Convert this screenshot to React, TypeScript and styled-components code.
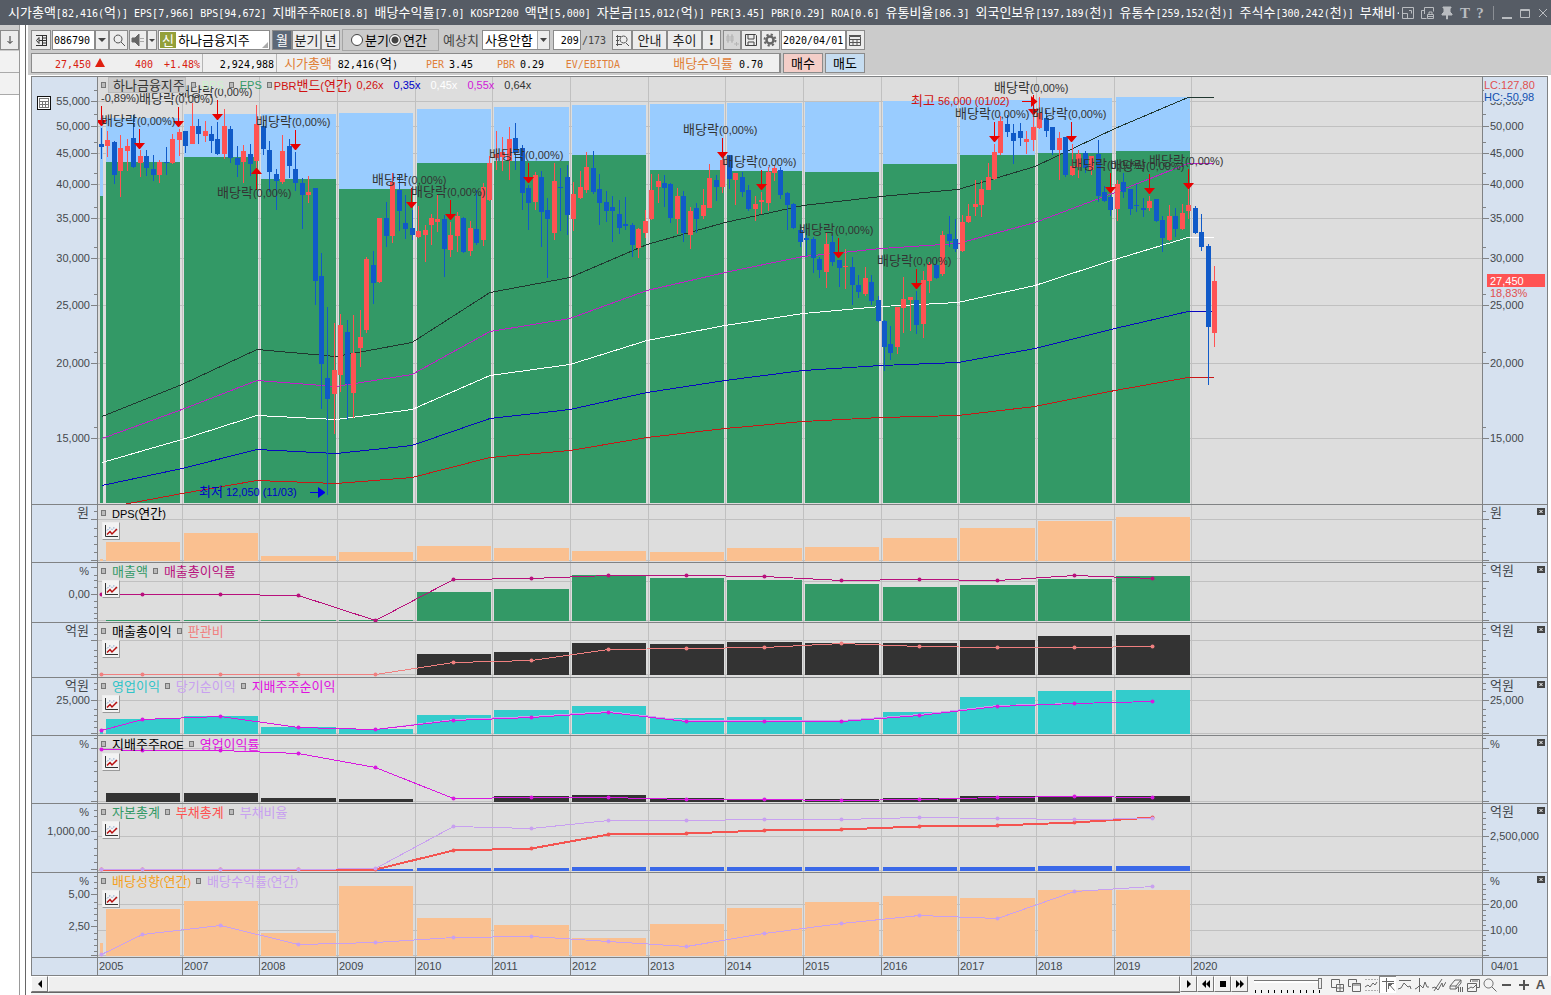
import React from "react";
import styled, { createGlobalStyle, css } from "styled-components";

/* ---------- theme values ---------- */
const KR = '"Noto Sans CJK KR", sans-serif';
const SANS = '"Liberation Sans", "Noto Sans CJK KR", sans-serif';
const MONO = '"DejaVu Sans Mono", "Noto Sans CJK KR", monospace';
const C = {
  line: "#808284",
  grid: "#c0c0c0",
  plot: "#dddddd",
  axis: "#d6e1ef",
  bar: "#cbcbcb",
  text: "#44484c",
  green: "#339966",
  sky: "#99ccff",
  up: "#ff5353",
  down: "#105ac8",
  orange: "#fac090",
};

const Global = createGlobalStyle`
  *, *::before, *::after { box-sizing: border-box; }
  body { margin: 0; background: #fff; font: 13px/16px ${KR}; color: #000; }
  button, input, select { font: inherit; color: inherit; margin: 0; }
`;

/* ---------- mixed Korean / Latin text ---------- */
const runs = (text: string) => text.split(/([\uac00-\ud7a3]+)/).filter(Boolean);
const isKorean = (run: string) => /[\uac00-\ud7a3]/.test(run);

const Latin = styled.span`
  font-family: ${MONO};
  font-size: 10px;
`;
const Small = styled.span`
  font-family: ${SANS};
  font-size: 11px;
  white-space: pre;
`;
const Mixed = ({ children }: { children: string }) => (
  <>{runs(children).map((run, i) => (isKorean(run) ? run : <Latin key={i}>{run}</Latin>))}</>
);
const MixedSans = ({ children }: { children: string }) => (
  <>{runs(children).map((run, i) => (isKorean(run) ? run : <Small key={i}>{run}</Small>))}</>
);

const SvgText = styled.text`
  font: 13px ${KR};
  white-space: pre;
`;
const SvgLatin = styled.tspan`
  font: 11px ${SANS};
`;
const Txt = ({ x, y, fill, children }: { x: number; y: number; fill?: string; children: string }) => (
  <SvgText x={x} y={y} fill={fill}>
    {runs(children).map((run, i) => (isKorean(run) ? run : <SvgLatin key={i}>{run}</SvgLatin>))}
  </SvgText>
);

/* ---------- window ---------- */
const Window = styled.div`
  display: flex;
  flex-direction: column;
  min-height: 100vh;
  min-width: 900px;
`;
const TitleBar = styled.header`
  display: flex;
  align-items: center;
  height: 25px;
  background: #565c65;
  color: #fff;
`;
const TitleText = styled.div`
  flex: 1;
  min-width: 0;
  overflow: hidden;
  white-space: pre;
  padding-left: 8px;
  line-height: 25px;
`;
const TitleTools = styled.div`
  display: flex;
  align-items: center;
  width: 152px;
`;
const TitleButton = styled.button<{ $w: number }>`
  display: flex;
  align-items: center;
  justify-content: center;
  flex: none;
  width: ${(p) => p.$w}px;
  height: 20px;
  padding: 0;
  border: 0;
  background: none;
  color: #b9bcc0;
  font: bold 15px/20px "Liberation Serif", serif;
`;
const TitleRule = styled.span`
  width: 1px;
  height: 14px;
  margin: 0 4px 0 6px;
  background: #8b8f95;
`;
const Body = styled.div`
  display: flex;
  flex: 1;
`;
const Side = styled.aside`
  width: 20px;
  border-right: 1px solid #999;
  background: #fff;
`;
const SideHead = styled.div`
  height: 26px;
  padding-top: 5px;
  background: ${C.bar};
`;
const SideRow = styled.div`
  height: 22px;
  border-bottom: 1px solid #aaa;
  background: #f2f2f2;
`;
const Splitter = styled.div`
  width: 8px;
  border-left: 5px solid #fff;
  border-right: 2px solid #fff;
  background: #666;
`;
const Main = styled.main`
  flex: 1;
  min-width: 0;
`;

/* ---------- toolbars ---------- */
const Tools = styled.div`
  height: 50px;
  padding: 5px 0 0 3px;
  background: ${C.bar};
`;
const ToolRow = styled.div<{ $top?: number }>`
  display: flex;
  align-items: center;
  height: 20px;
  margin-top: ${(p) => p.$top ?? 0}px;
`;
const frame = css`
  flex: none;
  height: 20px;
  border: 1px solid #8b8b8b;
`;
const ToolButton = styled.button<{ $w: number; $gap?: number; $bg?: string; $fg?: string }>`
  ${frame}
  display: flex;
  align-items: center;
  justify-content: center;
  width: ${(p) => p.$w}px;
  margin-left: ${(p) => p.$gap ?? 0}px;
  padding: 0;
  white-space: nowrap;
  background: ${(p) => p.$bg ?? "#ececec"};
  color: ${(p) => p.$fg ?? "#222"};
`;
const TextBox = styled.input<{ $w: number; $gap?: number; $right?: boolean }>`
  ${frame}
  width: ${(p) => p.$w}px;
  margin-left: ${(p) => p.$gap ?? 0}px;
  padding: 0 1px;
  border-radius: 0;
  background: #fff;
  font: 10px/16px ${MONO};
  text-align: ${(p) => (p.$right ? "right" : "left")};
`;
const NameBox = styled.div`
  ${frame}
  position: relative;
  display: flex;
  align-items: center;
  width: 112px;
  margin-left: 1px;
  padding-left: 1px;
  background: #fff;
`;
const NameInput = styled.input`
  width: 88px;
  padding: 0 2px;
  border: 0;
  background: none;
  line-height: 18px;
`;
const Badge = styled.span`
  width: 16px;
  height: 16px;
  background: #94a03a;
  color: #fff;
  text-align: center;
`;
const Corner = styled.i`
  position: absolute;
  right: 1px;
  bottom: 1px;
  border: 3px solid transparent;
  border-right-color: #aaa;
  border-bottom-color: #aaa;
`;
const Radios = styled.fieldset`
  display: flex;
  align-items: center;
  flex: none;
  width: 97px;
  height: 22px;
  margin: 0 0 0 2px;
  padding: 0 0 0 8px;
  border: 1px solid #a5a5a5;
`;
const Radio = styled.label`
  display: flex;
  align-items: center;
  gap: 2px;
  input {
    appearance: none;
    width: 12px;
    height: 12px;
    border: 1px solid #444;
    border-radius: 50%;
    background: #fff;
  }
  input:checked {
    background: radial-gradient(#444 0 3px, #fff 4px);
  }
`;
const Label = styled.label<{ $gap: number }>`
  margin-left: ${(p) => p.$gap}px;
  color: #444;
  white-space: nowrap;
`;
const SelectBox = styled.div`
  ${frame}
  position: relative;
  width: 68px;
  margin-left: 3px;
  background: #fff;
  select {
    width: 66px;
    height: 18px;
    padding: 0 0 0 2px;
    border: 0;
    appearance: none;
    background: none;
    line-height: 18px;
  }
  svg {
    position: absolute;
    top: 0;
    right: 0;
    pointer-events: none;
  }
`;
const Quote = styled.div`
  ${frame}
  display: flex;
  align-items: center;
  width: 750px;
  background: #efefef;
  border-width: 1px 2px 1px 1px;
`;
const QuoteCell = styled.span<{ $w: number; $fg?: string; $rule?: boolean }>`
  flex: none;
  width: ${(p) => p.$w}px;
  height: 18px;
  line-height: 18px;
  text-align: right;
  white-space: nowrap;
  color: ${(p) => p.$fg ?? "#000"};
  border-right: ${(p) => (p.$rule ? "1px solid #b5b5b5" : "0")};
  padding-right: ${(p) => (p.$rule ? 2 : 0)}px;
`;

/* ---------- chart ---------- */
const Chart = styled.section`
  margin: 1px 3px 0 3px;
  border: 1px solid ${C.line};
  border-bottom: 0;
`;
const PanelRow = styled.div<{ $h: number }>`
  display: grid;
  grid-template-columns: 66px minmax(0, 1fr) 65px;
  height: ${(p) => p.$h + 1}px;
  border-bottom: 1px solid ${C.line};
`;
const AxisCell = styled.div<{ $right?: boolean }>`
  position: relative;
  background: ${C.axis};
  border-left: ${(p) => (p.$right ? `1px solid ${C.line}` : "0")};
  border-right: ${(p) => (p.$right ? "0" : `1px solid ${C.line}`)};
  overflow: hidden;
  svg { display: block; }
`;
const Plot = styled.div`
  position: relative;
  overflow: hidden;
  background: ${C.plot};
  > svg { display: block; }
`;
const Legend = styled.div`
  position: absolute;
  top: 0;
  left: 3px;
  display: flex;
  align-items: center;
  height: 16px;
  white-space: nowrap;
`;
const LegendItem = styled.span<{ $fg: string; $plain?: boolean; $tight?: boolean }>`
  display: flex;
  align-items: center;
  margin-right: ${(p) => (p.$plain ? 10 : 5)}px;
  color: ${(p) => p.$fg};
  &::before {
    content: "";
    display: ${(p) => (p.$plain ? "none" : "block")};
    width: 5px;
    height: 6px;
    margin-right: ${(p) => (p.$tight ? 2 : 6)}px;
    border: 1px solid #777;
    background: #bbb;
  }
`;
const Boxed = styled.span`
  padding: 0 0 0 4px;
  border: 1px solid #bbb;
  background: #cacaca;
  line-height: 14px;
`;
const ChartButton = styled.button`
  position: absolute;
  top: 17px;
  left: 4px;
  width: 18px;
  height: 18px;
  padding: 1px;
  border: 1px solid;
  border-color: #eee #999 #999 #eee;
  background: #f3f3f3;
  svg { display: block; }
`;
const CloseButton = styled.button`
  position: absolute;
  top: 3px;
  right: 2px;
  width: 8px;
  height: 7px;
  padding: 0;
  border: 0;
  background: #444;
  svg { display: block; }
`;
const TableButton = styled.button`
  position: absolute;
  top: 19px;
  left: 5px;
  width: 14px;
  height: 14px;
  padding: 0;
  border: 1px solid #111;
  background: #fff;
  svg { display: block; }
`;

/* x is measured from the window's left edge; the plot area opens at PLOT_X */
const PLOT_X = 98;
const YEARS: [number, string][] = [
  [182, "2007"], [259, "2008"], [337, "2009"], [415, "2010"], [492, "2011"],
  [570, "2012"], [648, "2013"], [725, "2014"], [803, "2015"], [881, "2016"],
  [958, "2017"], [1036, "2018"], [1114, "2019"], [1191, "2020"],
];
const BARS = [
  [100, 103], [106, 180], [184, 258], [261, 336], [339, 413], [417, 491], [494, 569], [572, 646],
  [650, 724], [727, 802], [805, 879], [883, 957], [960, 1035], [1038, 1112], [1116, 1190],
];
const MIDS = [101, 142, 220, 298, 375, 453, 531, 608, 686, 764, 841, 919, 997, 1074, 1152];

type Scale = { unit?: string; labels?: [number, string][]; major: number[]; minor: number[] };
type Series = { fg: string; ys: number[]; w?: number; dots?: boolean };
type PanelSpec = {
  top: number;
  h: number;
  legend: [string, string][];
  grid: number[];
  left: Scale;
  right: Scale;
  bars: number[];
  fill: string;
  base: number;
  series: Series[];
};

const Axis = ({ top, h, s, right }: { top: number; h: number; s: Scale; right?: boolean }) => (
  <svg width="65" height={h}>
    <g transform={`translate(0 ${-top})`} shapeRendering="crispEdges" fill={C.line}>
      {s.major.map((y) => <rect key={y} x={right ? 0 : 59} y={y} width="6" height="1" />)}
      {s.minor.map((y) => <rect key={y} x={right ? 0 : 62} y={y} width="3" height="1" />)}
    </g>
    <g transform={`translate(0 ${-top})`} fill={C.text} textAnchor={right ? "start" : "end"}>
      {s.unit && <Txt x={right ? 7 : 57} y={top + 12}>{s.unit}</Txt>}
      {(s.labels ?? []).map(([y, t]) => <Txt key={y} x={right ? 7 : 58} y={y + 4}>{t}</Txt>)}
    </g>
  </svg>
);

const Grid = ({ top, ys }: { top: number; ys: number[] }) => (
  <g fill={C.grid} shapeRendering="crispEdges">
    {YEARS.map(([x]) => <rect key={x} x={x - PLOT_X} y="0" width="1" height="100%" />)}
    {ys.map((y) => <rect key={y} x="0" y={y - top} width="100%" height="1" />)}
  </g>
);

const Bars = ({ tops, base, fill }: { tops: number[]; base: number; fill: string }) => (
  <g fill={fill} shapeRendering="crispEdges">
    {BARS.map(([a, b], i) =>
      tops[i] < base ? <rect key={a} x={a} y={tops[i]} width={b - a} height={base - tops[i]} /> : null
    )}
  </g>
);

const Line = ({ s }: { s: Series }) => (
  <g fill={s.fg}>
    <polyline
      fill="none"
      stroke={s.fg}
      strokeWidth={s.w ?? 1}
      shapeRendering="crispEdges"
      points={MIDS.map((x, i) => `${x + 0.5},${s.ys[i] + 0.5}`).join(" ")}
    />
    {s.dots !== false && MIDS.map((x, i) => <circle key={x} cx={x + 0.5} cy={s.ys[i] + 0.5} r="2" />)}
  </g>
);

const five = (y: number) => [y, y, y, y, y];
const PANELS: PanelSpec[] = [
  {
    top: 505, h: 57, legend: [["DPS(연간)", "#000"]], grid: [519, 560],
    left: { unit: "원", major: [519, 560], minor: [511, 528, 536, 544, 552] },
    right: { unit: "원", major: [519, 560], minor: [511, 528, 536, 544, 552] },
    bars: [559, 542, 533, 556, 552, 546, 548, 551, 552, 548, 547, 538, 528, 521, 517],
    fill: C.orange, base: 561, series: [],
  },
  {
    top: 563, h: 59, legend: [["매출액", C.green], ["매출총이익률", "#b8107c"]], grid: [581, 620],
    left: { unit: "%", labels: [[594, "0,00"]], major: [567, 594], minor: [575, 580, 587, 601, 607, 613, 618] },
    right: { unit: "억원", major: [581, 620], minor: [565, 573, 588, 596, 604, 612] },
    bars: [621, 620, 620, 620, 620, 592, 589, 575, 578, 580, 584, 587, 585, 579, 576],
    fill: C.green, base: 621,
    series: [{ fg: "#b8107c", ys: [594, 594, 594, 595, 620, 579, 578, 575, 575, 576, 580, 579, 580, 575, 578] }],
  },
  {
    top: 623, h: 54, legend: [["매출총이익", "#000"], ["판관비", "#f08080"]], grid: [640, 674],
    left: { unit: "억원", major: [640, 674], minor: [628, 634, 650, 656, 662, 668] },
    right: { unit: "억원", major: [640, 674], minor: [628, 634, 650, 656, 662, 668] },
    bars: [...five(675), 654, 652, 643, 644, 642, 643, 643, 640, 636, 635],
    fill: "#333333", base: 675,
    series: [{ fg: "#f08080", ys: [...five(674), 662, 660, 649, 648, 647, 643, 646, 647, 647, 646] }],
  },
  {
    top: 678, h: 57, legend: [["영업이익", "#30c4c8"], ["당기순이익", "#c8a0f0"], ["지배주주순이익", "#e010e0"]],
    grid: [700, 733],
    left: { unit: "억원", labels: [[700, "25,000"]], major: [700, 733], minor: [683, 689, 709, 715, 721, 727] },
    right: { unit: "억원", labels: [[700, "25,000"]], major: [700, 733], minor: [683, 689, 709, 715, 721, 727] },
    bars: [731, 719, 716, 727, 729, 715, 710, 706, 718, 717, 720, 712, 697, 691, 690],
    fill: "#33cccc", base: 734,
    series: [
      { fg: "#c8a0f0", dots: false, ys: [730, 719, 716, 727, 729, 719, 716, 711, 720, 720, 720, 714, 705, 703, 701] },
      { fg: "#d818e0", ys: [730, 719, 716, 727, 729, 720, 717, 712, 721, 721, 721, 715, 706, 703, 701] },
    ],
  },
  {
    top: 736, h: 67, legend: [["지배주주ROE", "#000"], ["영업이익률", "#e010e0"]], grid: [748, 801],
    left: { unit: "%", major: [748, 801], minor: [738, 761, 771, 781, 791] },
    right: { unit: "%", major: [748, 801], minor: [738, 761, 771, 781, 791] },
    bars: [802, 793, 793, 798, 799, 802, 796, 795, 798, 799, 799, 798, 796, 796, 796],
    fill: "#333333", base: 802,
    series: [{ fg: "#d818e0", ys: [749, 750, 750, 753, 767, 798, 797, 797, 799, 799, 800, 799, 797, 796, 797] }],
  },
  {
    top: 804, h: 68, legend: [["자본총계", C.green], ["부채총계", "#ff5050"], ["부채비율", "#c8a0f0"]], grid: [836, 870],
    left: { unit: "%", labels: [[831, "1,000,00"]], major: [831, 869], minor: [810, 816, 824, 839, 848, 855, 862] },
    right: { unit: "억원", labels: [[836, "2,500,000"]], major: [836, 870], minor: [812, 818, 824, 829, 846, 852, 858, 864] },
    bars: [871, 871, 871, 871, 869, 868, 868, 867, 867, 867, 867, 867, 867, 866, 866],
    fill: "#3a68e8", base: 871,
    series: [
      { fg: "#f45450", w: 2, ys: [...five(869), 850, 848, 834, 833, 830, 829, 826, 825, 822, 817] },
      { fg: "#c8a0f0", ys: [869, 869, 869, 869, 868, 826, 828, 820, 820, 819, 819, 817, 818, 819, 818] },
    ],
  },
  {
    top: 873, h: 84, legend: [["배당성향(연간)", "#f5a020"], ["배당수익률(연간)", "#c8a0f0"]], grid: [904, 930, 955],
    left: {
      unit: "%", labels: [[894, "5,00"], [926, "2,50"]], major: [894, 926, 955],
      minor: [876, 882, 888, 902, 908, 914, 920, 933, 939, 945, 951],
    },
    right: {
      unit: "%", labels: [[904, "20,00"], [930, "10,00"]], major: [904, 930, 955],
      minor: [884, 889, 894, 899, 910, 915, 920, 925, 935, 940, 945, 950],
    },
    bars: [943, 909, 901, 933, 886, 918, 925, 938, 924, 908, 902, 896, 898, 890, 890],
    fill: C.orange, base: 956,
    series: [{ fg: "#c8a0f0", ys: [954, 934, 925, 944, 942, 937, 936, 941, 946, 933, 923, 915, 918, 891, 886] }],
  },
];

/* main price panel */
const MAIN_TOP = 77;
const MAIN_H = 427;
const BPS = [118, 118, 114, 114, 113, 109, 107, 105, 104, 103, 102, 101, 100, 98, 97];
const EPS = [196, 162, 157, 179, 189, 163, 161, 155, 170, 171, 172, 164, 155, 153, 151];
const PRICES: [number, string][] = [
  [101, "55,000"], [126, "50,000"], [153, "45,000"], [184, "40,000"], [218, "35,000"],
  [258, "30,000"], [305, "25,000"], [363, "20,000"], [438, "15,000"],
];
const PRICE_SCALE: Scale = {
  labels: PRICES,
  major: PRICES.map(([y]) => y),
  minor: [90, 114, 142, 173, 207, 247, 294, 352, 427],
};
const BAND_X = [102, 182, 257, 336, 412, 490, 570, 647, 725, 803, 881, 958, 1035, 1115, 1188, 1214];
const BANDS: [string, number[]][] = [
  ["#203830", [416, 384, 349, 356, 342, 292, 277, 244, 222, 205, 196, 189, 166, 128, 97, 97]],
  ["#c020c8", [438, 409, 380, 386, 374, 331, 318, 290, 272, 256, 248, 243, 222, 192, 163, 163]],
  ["#ffffff", [462, 439, 415, 419, 409, 375, 364, 340, 325, 313, 306, 302, 285, 259, 237, 237]],
  ["#0808c0", [485, 468, 449, 453, 445, 418, 409, 392, 380, 370, 365, 362, 348, 328, 311, 311]],
  ["#c81818", [508, 493, 480, 483, 477, 457, 450, 437, 428, 421, 417, 415, 406, 390, 377, 377]],
];

/* monthly candles: high, body top, body bottom, low, rising */
const CANDLES: number[][] = [
  [128,144,147,159,0],[131,140,146,157,1],[141,142,175,184,0],[135,148,171,197,1],[139,146,151,171,1],[115,138,167,168,0],
  [150,156,163,177,1],[150,156,168,176,0],[155,169,175,181,0],[160,162,175,183,1],[147,162,163,175,0],[134,139,163,164,1],
  [129,132,140,156,1],[131,131,146,153,0],[103,126,144,144,1],[119,126,134,144,0],[121,131,136,142,1],[126,134,141,153,0],
  [122,139,154,155,0],[109,126,154,159,1],[126,129,158,163,0],[146,158,165,177,0],[145,151,162,183,1],[144,154,164,176,0],
  [105,124,161,168,1],[122,126,149,155,0],[141,150,172,192,0],[169,174,181,210,0],[135,151,182,184,1],[139,146,166,178,0],
  [152,169,183,191,0],[178,183,195,229,0],[176,192,195,203,1],[188,188,281,305,0],[253,276,364,409,0],[307,378,399,495,0],
  [323,370,394,434,1],[314,325,375,392,1],[320,332,384,420,0],[315,353,393,418,1],[310,337,348,367,1],[257,259,330,333,1],
  [251,265,283,304,0],[218,218,282,283,1],[202,218,236,247,0],[173,182,236,243,1],[174,190,211,231,0],[195,223,229,239,0],
  [210,228,235,240,0],[206,231,237,238,1],[225,230,235,262,1],[214,218,225,245,1],[195,219,222,232,1],[215,219,249,277,0],
  [222,235,250,257,1],[212,216,236,252,1],[217,218,252,253,0],[221,228,251,256,1],[190,229,243,245,0],[183,187,240,246,1],
  [156,163,200,201,1],[131,154,158,170,1],[137,152,157,171,1],[127,139,161,180,1],[123,138,153,170,0],[145,148,193,210,0],
  [185,188,203,230,0],[172,175,202,210,1],[171,177,212,247,0],[198,210,219,278,0],[163,181,233,240,1],[168,187,188,231,0],
  [165,177,215,235,0],[182,194,219,231,1],[171,187,198,199,1],[152,167,190,193,1],[151,168,192,194,0],[174,189,203,225,0],
  [191,202,211,222,0],[196,207,211,242,0],[200,214,228,234,0],[197,224,226,230,0],[223,225,245,257,0],[228,229,248,258,1],
  [210,221,233,238,1],[174,190,219,220,1],[174,181,187,203,1],[175,183,188,207,0],[183,184,218,223,0],[188,196,219,234,1],
  [191,196,233,242,0],[207,211,235,249,1],[203,208,219,233,0],[189,205,216,219,1],[164,178,208,208,1],[175,180,187,201,0],
  [155,160,187,193,1],[155,155,179,189,0],[173,173,180,205,1],[172,177,192,197,0],[185,190,209,211,0],[196,204,209,221,1],
  [192,200,202,214,1],[167,172,203,211,1],[165,168,173,181,1],[167,170,195,199,0],[192,193,205,230,0],[203,204,228,229,0],
  [225,230,242,247,0],[228,238,240,256,0],[237,239,258,273,0],[257,259,270,278,0],[232,244,272,288,1],[235,242,262,266,0],
  [260,260,268,287,0],[249,266,267,289,1],[257,267,285,305,0],[275,285,292,298,0],[267,278,294,296,1],[275,282,301,305,0],
  [296,300,321,322,0],[320,321,347,371,0],[326,344,353,360,0],[307,307,347,354,1],[277,299,308,333,1],[297,297,300,331,1],
  [291,300,325,334,0],[271,280,324,338,1],[262,264,281,293,1],[260,265,278,279,0],[231,235,274,276,1],[216,234,241,247,0],
  [219,239,249,252,0],[215,222,251,252,1],[204,216,222,223,1],[180,204,207,216,1],[180,189,205,217,1],[163,177,190,190,1],
  [144,152,179,180,1],[116,121,153,155,1],[115,124,132,137,0],[124,133,141,164,0],[123,131,138,146,0],[131,139,142,154,1],
  [97,127,140,151,1],[97,113,128,129,1],[110,118,131,137,0],[127,127,150,155,0],[132,138,150,180,1],[137,137,175,177,0],
  [144,166,175,176,1],[150,154,167,178,1],[151,153,168,173,0],[156,156,170,175,1],[140,154,196,202,0],[186,192,201,202,0],
  [195,197,210,216,0],[180,184,209,221,1],[173,182,192,198,0],[189,189,209,215,0],[184,205,206,212,0],[198,208,210,217,0],
  [196,201,208,211,1],[199,199,221,222,0],[216,220,238,252,0],[205,216,240,241,1],[208,216,229,237,0],[204,213,229,230,1],
  [187,205,211,219,1],[206,208,233,234,0],[214,232,247,251,0],[244,246,327,385,0],[266,281,333,347,1],
];
const candleX = (i: number) => Math.round(101 + i * 6.471);

const MARKS: [number, number][] = [
  [101, 121], [139, 99], [178, 92], [256, 122], [217, 193], [372, 180], [411, 192], [489, 155], [683, 130], [722, 162],
  [799, 230], [877, 261], [955, 114], [994, 88], [1032, 114], [1071, 165], [1110, 166], [1149, 161],
];
const ARROWS: [number, number][] = [
  [101, 126], [139, 149], [178, 127], [217, 120], [295, 150], [411, 208], [450, 220], [528, 183], [722, 158], [761, 190],
  [838, 258], [916, 289], [994, 142], [1033, 115], [1071, 142], [1110, 193], [1149, 194], [1188, 189],
];

const PricePanel = () => (
  <PanelRow $h={MAIN_H}>
    <AxisCell>
      <Axis top={MAIN_TOP} h={MAIN_H} s={PRICE_SCALE} />
      <TableButton aria-label="표">
        <svg width="12" height="12" stroke="#777" fill="none" shapeRendering="crispEdges">
          <path d="M1.5 1.5h9v9h-9zM1.5 4.5h9M1.5 7.5h9M4.5 4v7M7.5 4v7" />
        </svg>
      </TableButton>
    </AxisCell>
    <Plot>
      <svg width="100%" height={MAIN_H}>
        <Grid top={MAIN_TOP} ys={PRICES.map(([y]) => y)} />
        <g transform={`translate(${-PLOT_X} ${-MAIN_TOP})`}>
          <Bars tops={BPS} base={503} fill={C.sky} />
          <Bars tops={EPS} base={503} fill={C.green} />
          {BANDS.map(([fg, ys]) => (
            <polyline key={fg} fill="none" stroke={fg} shapeRendering="crispEdges"
              points={BAND_X.map((x, i) => `${x},${ys[i] + 0.5}`).join(" ")} />
          ))}
          <g shapeRendering="crispEdges">
            {CANDLES.map(([hi, t, b, lo, up], i) => (
              <g key={i} fill={up ? C.up : C.down}>
                <rect x={candleX(i)} y={hi} width="1" height={lo - hi} />
                <rect x={candleX(i) - 2} y={t} width="5" height={Math.max(1, b - t)} />
              </g>
            ))}
          </g>
          <g fill="#e60000">
            {ARROWS.map(([x, y]) => (
              <path key={x} d={`M${x} ${y - 20}h1v14h5l-5 6h-1l-5 -6h5z`} />
            ))}
            <path d="M256 168h1l5 6h-5v16h-1v-16h-5z" />
            <path d="M1022 101h9v-5l6 5v1l-6 5v-5h-9z" />
          </g>
          <path d="M310 492h8v-5l7 5v1l-7 5v-5h-8z" fill="#0000e6" />
          {MARKS.map(([x, y]) => <Txt key={x} x={x} y={y + 4} fill="#333">배당락(0,00%)</Txt>)}
          <Txt x={101} y={102} fill="#333">-0,89%)</Txt>
          <Txt x={911} y={105} fill="#d01010">최고 56,000 (01/02)</Txt>
          <Txt x={199} y={496} fill="#0000c8">최저 12,050 (11/03)</Txt>
        </g>
      </svg>
      <Legend>
        <LegendItem $fg="#333" $tight><Boxed>하나금융지주</Boxed></LegendItem>
        <LegendItem $fg="#ccf2cc"><Small>BPS</Small></LegendItem>
        <LegendItem $fg={C.green}><Small>EPS</Small></LegendItem>
        <LegendItem $fg="#d01010" $tight><span><MixedSans>PBR밴드(연간)</MixedSans></span></LegendItem>
        <LegendItem $fg="#d01010" $plain><Small>0,26x</Small></LegendItem>
        <LegendItem $fg="#0000c8" $plain><Small>0,35x</Small></LegendItem>
        <LegendItem $fg="#fff" $plain><Small>0,45x</Small></LegendItem>
        <LegendItem $fg="#d018d8" $plain><Small>0,55x</Small></LegendItem>
        <LegendItem $fg="#333" $plain><Small>0,64x</Small></LegendItem>
      </Legend>
    </Plot>
    <AxisCell $right>
      <svg width="65" height={MAIN_H}>
        <Axis top={MAIN_TOP} h={MAIN_H} s={PRICE_SCALE} right />
        <rect width="62" height="25" x="1" fill={C.axis} />
        <Txt x={1} y={12} fill="#e05050">LC:127,80</Txt>
        <Txt x={1} y={24} fill="#1050b0">HC:-50,98</Txt>
        <rect x="4" y="197" width="58" height="13" fill={C.up} />
        <Txt x={7} y={208} fill="#fff">27,450</Txt>
        <Txt x={7} y={220} fill="#e05050">18,83%</Txt>
      </svg>
    </AxisCell>
  </PanelRow>
);

const SubPanel = ({ p }: { p: PanelSpec }) => (
  <PanelRow $h={p.h}>
    <AxisCell><Axis top={p.top} h={p.h} s={p.left} /></AxisCell>
    <Plot>
      <svg width="100%" height={p.h}>
        <Grid top={p.top} ys={p.grid} />
        <g transform={`translate(${-PLOT_X} ${-p.top})`}>
          <Bars tops={p.bars} base={p.base} fill={p.fill} />
          {p.series.map((s) => <Line key={s.fg} s={s} />)}
        </g>
      </svg>
      <Legend>
        {p.legend.map(([t, fg]) => (
          <LegendItem key={t} $fg={fg}><span><MixedSans>{t}</MixedSans></span></LegendItem>
        ))}
      </Legend>
      <ChartButton aria-label="차트 설정">
        <svg width="14" height="14" fill="none">
          <path d="M1.5 1v11.5H14" stroke="#333" />
          <path d="M3 6.5l3-3 2 2 2-2 3 3" stroke="#7a9cc8" strokeDasharray="2 1" />
          <path d="M3 10.500l3-3 2 2.500 5-5" stroke="#b81010" strokeWidth="1.500" />
        </svg>
      </ChartButton>
    </Plot>
    <AxisCell $right>
      <Axis top={p.top} h={p.h} s={p.right} right />
      <CloseButton aria-label="닫기">
        <svg width="8" height="7" stroke="#fff"><path d="M2.5 2l3 3M5.5 2l-3 3" /></svg>
      </CloseButton>
    </AxisCell>
  </PanelRow>
);

const DatePlot = styled(Plot)`
  background: ${C.axis};
`;
const DateRow = () => (
  <PanelRow $h={17}>
    <AxisCell />
    <DatePlot>
      <svg width="100%" height="17">
        <g transform={`translate(${-PLOT_X} 0)`} fill={C.text}>
          <Txt x={99} y={12}>2005</Txt>
          {YEARS.map(([x, t]) => (
            <g key={t}>
              <rect x={x} y="0" width="1" height="17" fill={C.line} />
              <Txt x={x + 2} y={12}>{t}</Txt>
            </g>
          ))}
        </g>
      </svg>
    </DatePlot>
    <AxisCell $right>
      <svg width="64" height="17" fill={C.text}><Txt x={8} y={12}>04/01</Txt></svg>
    </AxisCell>
  </PanelRow>
);

/* ---------- bottom bar ---------- */
const Bottom = styled.footer`
  display: flex;
  align-items: flex-start;
  height: 19px;
  margin-left: 3px;
  background: #f3f3f3;
`;
const Scroll = styled.div`
  display: flex;
  flex: 1;
  height: 17px;
  border-bottom: 1px solid #666;
`;
const Key = styled.button`
  display: flex;
  align-items: center;
  justify-content: center;
  flex: none;
  width: 17px;
  height: 16px;
  padding: 0;
  border: 1px solid;
  border-color: #fff #777 #777 #fff;
  background: #f0f0f0;
`;
const Thumb = styled.div`
  flex: 1;
  border: 1px solid;
  border-color: #fff #777 #999 #fff;
  background: #efefef;
`;
const Range = styled.div`
  width: 80px;
  height: 18px;
  padding: 2px 6px 0 6px;
  svg { display: block; }
`;
const Slider = styled.input`
  display: block;
  appearance: none;
  width: 68px;
  height: 11px;
  margin: 0;
  background: linear-gradient(#777 0 1px, #fff 1px 3px, transparent 3px) 0 2px no-repeat;
  &::-webkit-slider-thumb {
    appearance: none;
    width: 4px;
    height: 11px;
    border: 1px solid #777;
    background: #eee;
  }
`;
const IconKey = styled.button<{ $on?: boolean }>`
  display: flex;
  align-items: center;
  justify-content: center;
  width: 17px;
  height: 17px;
  padding: 0;
  border: 0;
  background: ${(p) => (p.$on ? "#fff" : "none")};
  box-shadow: ${(p) => (p.$on ? "inset 1px 1px 0 #888" : "none")};
  font: bold 13px/17px "Liberation Sans", sans-serif;
  color: #555;
`;
const Keys = styled.div`
  display: flex;
  width: 223px;
`;

const Glyph = ({ d, w = 14, fill = "none", stroke = "#666" }: { d: string; w?: number; fill?: string; stroke?: string }) => (
  <svg width={w} height="14" viewBox={`0 0 ${w} 14`} fill={fill} stroke={stroke}><path d={d} /></svg>
);
const BOTTOM_ICONS: [string, string, boolean?][] = [
  ["추가", "M1.5 1.5h8v4M6 9.5H1.5v-8M6.5 6.5h7v7h-7zM10 6.5v7M6.5 10h7"],
  ["복사", "M1.5 1.5h8v3M4 8.5H1.5v-7M5.5 5.5h8v8h-8zM5.5 7h8"],
  ["범위", "M1.5 1.5h1m2 0h1m2 0h1m2 0h1m2 0h1M1.5 12.5h1m2 0h1m2 0h1m2 0h1m2 0h1M1 9l3-2 2 2 3-4 2 2 2-3"],
  ["십자선", "M1 3.5h12M5.5 0v14M7.500 5.500l6 7M7.5 11V5.500H13M8 6.500h3M8 7.500h2", true],
  ["추세", "M1 2.5h12M0 11l3-1 3-5 4 4 2-1 1 3"],
  ["수직", "M4.5 0v14M0 11l2-1 3-3 3 3 2-6 2 5 2 0"],
  ["사선", "M2 13L10 1M0 10l3-1 3 3 4-7 1 4 3-5"],
  ["지우개", "M1 8l5-6h6l-5 6zM1 8v3h6V8M7 11l5-6V2M9.5 9v5M11.5 9v5M13.5 9v5"],
  ["차트", "M4.5 4V1.5h9v8H11M1.5 5.5h9v8h-9zM2 11l3-2 2 1 3-3M6 3h6"],
  ["확대", "M5.5 1a4.5 4.5 0 1 0 .1 0M9 9l4.500 4.500"],
];

const Down = () => (
  <svg width="12" height="18">
    <path d="M0 0h12v18H0z" fill="#ececec" />
    <path d="M.5 0v18" stroke="#aaa" />
    <path d="M3 7h7l-3.5 4z" fill="#444" />
  </svg>
);

const TITLE =
  "시가총액[82,416(억)] EPS[7,966] BPS[94,672] 지배주주ROE[8.8] 배당수익률[7.0] KOSPI200 액면[5,000] 자본금[15,012(억)] PER[3.45] PBR[0.29] ROA[0.6] 유통비율[86.3] 외국인보유[197,189(천)] 유통수[259,152(천)] 주식수[300,242(천)] 부채비·";

export default function App() {
  return (
    <Window>
      <Global />
      <TitleBar>
        <TitleText><Mixed>{TITLE}</Mixed></TitleText>
        <TitleTools>
          <TitleButton $w={18} aria-label="배치"><Glyph d="M1.5 1.5h11v11h-11zM1.5 7.5h5v5M8 4.5h2.5v3" stroke="currentColor" /></TitleButton>
          <TitleButton $w={20} aria-label="잠금"><Glyph d="M4.5 8V1.5h9v4M4 4.5H1.5v8h5M7.500 8.500h6v4h-6zM7.500 10.500h6M9 8V6h3v2" stroke="currentColor" /></TitleButton>
          <TitleButton $w={20} aria-label="고정"><Glyph d="M3 1h8v1h-1v4l2 2v1H2V8l2-2V2H3zM6.5 9h1v4h-1z" fill="currentColor" stroke="currentColor" /></TitleButton>
          <TitleButton $w={16} aria-label="글꼴">T</TitleButton>
          <TitleButton $w={14} aria-label="도움말">?</TitleButton>
          <TitleRule />
          <TitleButton $w={18} aria-label="최소화"><Glyph d="M2 11h10v2H2z" fill="currentColor" stroke="none" /></TitleButton>
          <TitleButton $w={18} aria-label="최대화"><Glyph d="M2.5 3.500h9v8h-9zM2.5 4.500h9" stroke="currentColor" /></TitleButton>
          <TitleButton $w={17} aria-label="닫기"><Glyph d="M3 3l8 8M11 3l-8 8" stroke="currentColor" /></TitleButton>
        </TitleTools>
      </TitleBar>
      <Body>
        <Side>
          <SideHead>
            <ToolButton $w={19} aria-label="아래로"><Glyph d="M7 3v7M4.5 8L7 10.5 9.5 8" stroke="#333" /></ToolButton>
          </SideHead>
          <SideRow />
          <SideRow />
        </Side>
        <Splitter />
        <Main>
          <Tools>
            <ToolRow>
              <ToolButton $w={20} aria-label="패널"><Glyph d="M2 2.5h11M12.5 2v10M8.5 2v10M2 12.5h11M5 4.500L2.500 7.500l2.500 3zM5 7.500h3M9 5h3M9 7.500h3M9 10h3" stroke="#333" /></ToolButton>
              <TextBox $w={43} $gap={1} defaultValue="086790" aria-label="종목코드" />
              <ToolButton $w={14} aria-label="코드 목록"><Glyph w={8} d="M0 5h8L4 9z" fill="#444" stroke="none" /></ToolButton>
              <ToolButton $w={19} aria-label="검색"><Glyph d="M6 2a4 4 0 1 0 .1 0M9 9l4 4" stroke="#555" /></ToolButton>
              <ToolButton $w={18} $gap={1} aria-label="소리"><Glyph d="M1 5h3l4-4v12L4 9H1zM10 5v1M10 8v1M12 5v1M12 8v1" fill="#666" /></ToolButton>
              <ToolButton $w={10} aria-label="소리 목록"><Glyph w={6} d="M0 6h6L3 9z" fill="#444" stroke="none" /></ToolButton>
              <NameBox>
                <Badge>신</Badge>
                <NameInput defaultValue="하나금융지주" aria-label="종목명" />
                <Corner />
              </NameBox>
              <ToolButton $w={20} $gap={2} $bg="#5c6878" $fg="#fff">월</ToolButton>
              <ToolButton $w={29}>분기</ToolButton>
              <ToolButton $w={19}>년</ToolButton>
              <Radios>
                <Radio><input type="radio" name="period" />분기</Radio>
                <Radio><input type="radio" name="period" defaultChecked />연간</Radio>
              </Radios>
              <Label $gap={4} htmlFor="forecast">예상치</Label>
              <SelectBox>
                <select id="forecast"><option>사용안함</option></select>
                <Down />
              </SelectBox>
              <TextBox $w={28} $gap={3} $right defaultValue="209" aria-label="표시 개수" id="count" />
              <Label $gap={1} htmlFor="count"><Latin>/173</Latin></Label>
              <ToolButton $w={20} $gap={6} aria-label="차트 검색"><Glyph d="M1 3.5h5M1 7.5h3M1 11.5h6M2.5 2v11M8.5 3a3.5 3.5 0 1 0 .1 0M11 10l3 3" stroke="#555" /></ToolButton>
              <ToolButton $w={35}>안내</ToolButton>
              <ToolButton $w={35}>추이</ToolButton>
              <ToolButton $w={19}><b>!</b></ToolButton>
              <ToolButton $w={18} $gap={2} $bg="#d6d6d6" aria-label="봉"><Glyph d="M3 1v9M7 1v9M2 3h2v5H2zM6 3h2v5H6zM9 11h5M11.5 9v4" stroke="#b5b5b5" /></ToolButton>
              <ToolButton $w={20} aria-label="저장"><Glyph d="M1.5 1.5h10l1 1v10h-11zM4 2v4h6V2M4 12V9h6v3" stroke="#444" /></ToolButton>
              <ToolButton $w={19} aria-label="설정">
                <svg width="14" height="14" fill="none" stroke="#666">
                  <circle cx="7" cy="7" r="3.5" strokeWidth="2.5" />
                  <circle cx="7" cy="7" r="5.5" strokeWidth="2" strokeDasharray="2.2 2.12" />
                </svg>
              </ToolButton>
              <TextBox $w={65} $gap={1} defaultValue="2020/04/01" aria-label="기준일" />
              <ToolButton $w={19} aria-label="달력"><Glyph d="M1.5 3.5h11v9h-11zM1 2.5h12M1 6.5h12M1 9.5h12M5 6v6M9 6v6" stroke="#555" /></ToolButton>
            </ToolRow>
            <ToolRow $top={3}>
              <Quote>
                <QuoteCell $w={59} $fg="#d82010"><Latin>27,450</Latin></QuoteCell>
                <QuoteCell $w={15} $fg="#e02010"><Glyph w={12} d="M1 13h10L6 4z" fill="#e02010" stroke="none" /></QuoteCell>
                <QuoteCell $w={47} $fg="#d82010"><Latin>400</Latin></QuoteCell>
                <QuoteCell $w={50} $fg="#d82010" $rule><Latin>+1.48%</Latin></QuoteCell>
                <QuoteCell $w={74} $rule><Latin>2,924,988</Latin></QuoteCell>
                <QuoteCell $w={55} $fg="#e08038">시가총액</QuoteCell>
                <QuoteCell $w={66}><Mixed>82,416(억)</Mixed></QuoteCell>
                <QuoteCell $w={46} $fg="#e08038"><Latin>PER</Latin></QuoteCell>
                <QuoteCell $w={29}><Latin>3.45</Latin></QuoteCell>
                <QuoteCell $w={42} $fg="#e08038"><Latin>PBR</Latin></QuoteCell>
                <QuoteCell $w={29}><Latin>0.29</Latin></QuoteCell>
                <QuoteCell $w={76} $fg="#e08038"><Latin>EV/EBITDA</Latin></QuoteCell>
                <QuoteCell $w={113} $fg="#e08038">배당수익률</QuoteCell>
                <QuoteCell $w={30}><Latin>0.70</Latin></QuoteCell>
              </Quote>
              <ToolButton $w={40} $gap={2} $bg="#f4cec8" $fg="#000">매수</ToolButton>
              <ToolButton $w={40} $gap={2} $bg="#c6ddf1" $fg="#000">매도</ToolButton>
            </ToolRow>
          </Tools>
          <Chart>
            <PricePanel />
            {PANELS.map((p) => <SubPanel key={p.top} p={p} />)}
            <DateRow />
          </Chart>
          <Bottom>
            <Scroll>
              <Key aria-label="왼쪽"><Glyph w={8} d="M6 3v8L2 7z" fill="#000" stroke="none" /></Key>
              <Thumb />
            </Scroll>
            <Key aria-label="재생"><Glyph w={8} d="M2 3v8l4-4z" fill="#000" stroke="none" /></Key>
            <Key aria-label="뒤로"><Glyph w={10} d="M5 3v8L1 7zM9 3v8L5 7z" fill="#000" stroke="none" /></Key>
            <Key aria-label="정지"><Glyph w={8} d="M1 4h6v6H1z" fill="#000" stroke="none" /></Key>
            <Key aria-label="앞으로"><Glyph w={10} d="M1 3v8l4-4zM5 3v8l4-4z" fill="#000" stroke="none" /></Key>
            <Range>
              <Slider type="range" min={0} max={10} defaultValue={10} aria-label="배율" />
              <svg width="68" height="4" shapeRendering="crispEdges" fill="#000">
                {Array.from({ length: 11 }, (_, i) => <rect key={i} x={1 + i * 6.4} y="1" width="1" height="3" />)}
              </svg>
            </Range>
            <Keys>
              {BOTTOM_ICONS.map(([name, d, on]) => (
                <IconKey key={name} $on={on} aria-label={name}><Glyph d={d} /></IconKey>
              ))}
              <IconKey aria-label="축소"><Glyph d="M2 6h9v2H2z" fill="#555" stroke="none" /></IconKey>
              <IconKey aria-label="늘리기"><Glyph d="M2 6h4V2h2v4h4v2H8v4H6V8H2z" fill="#555" stroke="none" /></IconKey>
              <IconKey>A</IconKey>
            </Keys>
          </Bottom>
        </Main>
      </Body>
    </Window>
  );
}
